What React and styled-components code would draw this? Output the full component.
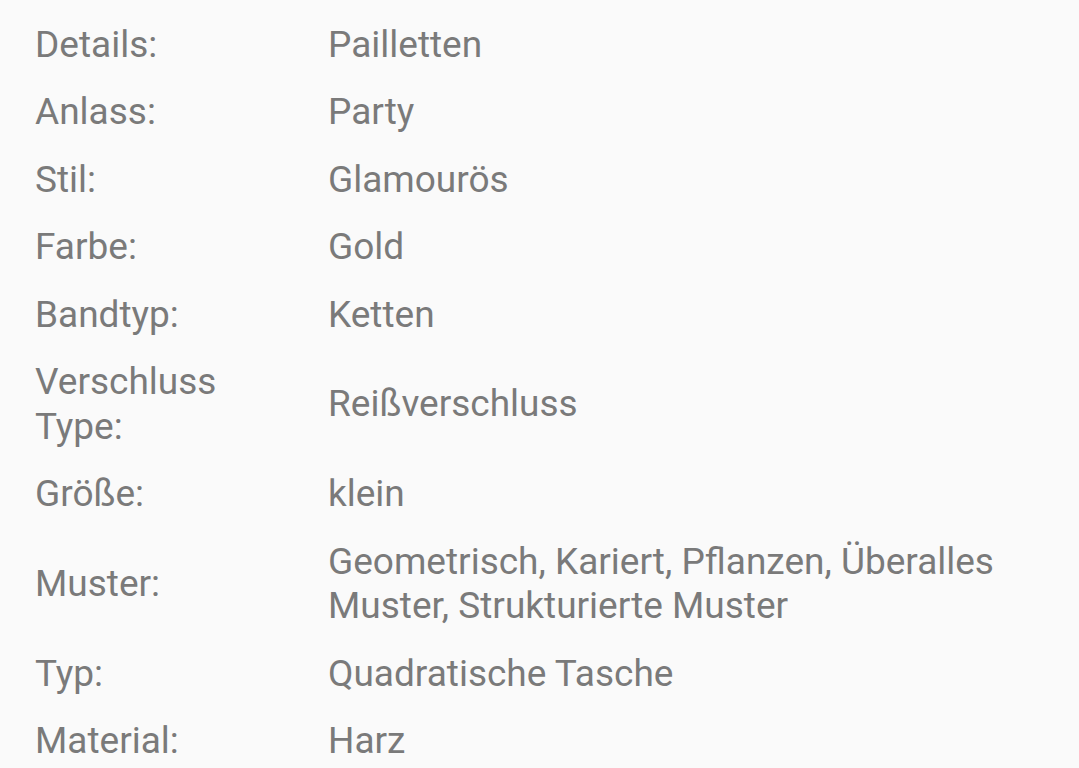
import React from "react";
import styled, { createGlobalStyle } from "styled-components";

const GlobalStyle = createGlobalStyle`
  html, body {
    margin: 0;
    padding: 0;
    background: #fafafa;
  }
  body {
    font-family: Roboto, "Noto Sans", Arial, sans-serif;
    -webkit-font-smoothing: antialiased;
  }
`;

const specs = [
  ["Details:", "Pailletten"],
  ["Anlass:", "Party"],
  ["Stil:", "Glamourös"],
  ["Farbe:", "Gold"],
  ["Bandtyp:", "Ketten"],
  ["Verschluss Type:", "Reißverschluss"],
  ["Größe:", "klein"],
  ["Muster:", "Geometrisch, Kariert, Pflanzen, Überalles Muster, Strukturierte Muster"],
  ["Typ:", "Quadratische Tasche"],
  ["Material:", "Harz"],
];

export default function App() {
  return (
    <>
      <GlobalStyle />
      <SpecList>
        {specs.map(([label, value]) => (
          <SpecRow key={label}>
            <Label>{label}</Label>
            <Value>{value}</Value>
          </SpecRow>
        ))}
      </SpecList>
    </>
  );
}

const SpecList = styled.div`
  padding: 11px 35px 0 35px;
  height: 768px;
  box-sizing: border-box;
  overflow: hidden;
`;

const SpecRow = styled.div`
  display: grid;
  grid-template-columns: 294px 1fr;
  align-items: center;
  padding: 11.5px 0;
  font-size: 37px;
  line-height: 44.5px;
  color: #7a7a7a;
`;

const Label = styled.div`
  padding-right: 40px;
`;

const Value = styled.div`
  margin-left: -1px;
`;
